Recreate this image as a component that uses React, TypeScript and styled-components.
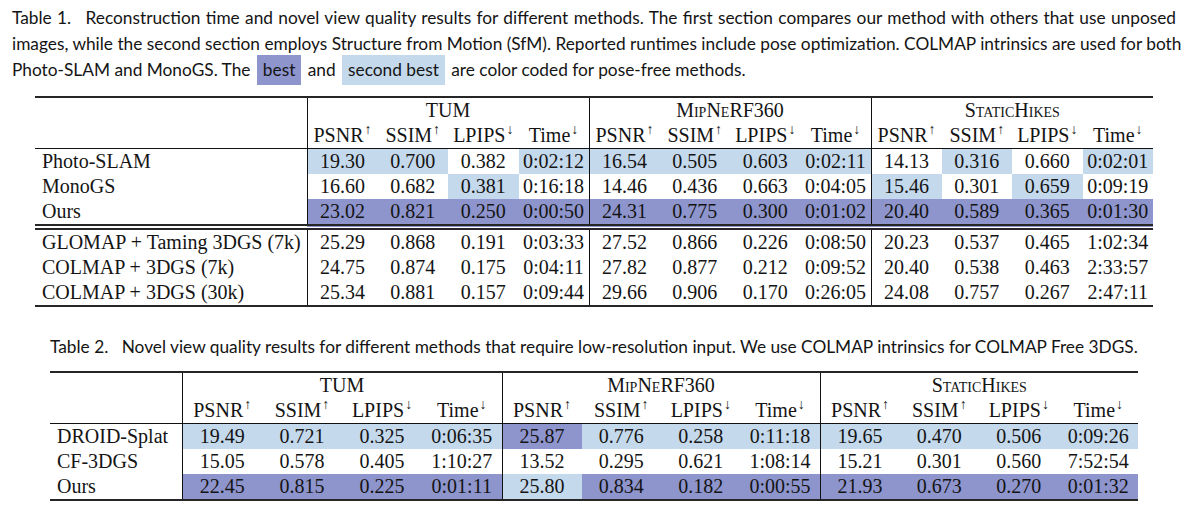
import styled, { createGlobalStyle } from 'styled-components'

const GlobalStyle = createGlobalStyle`
  html, body { margin: 0; padding: 0; background: #fff; }
  body { width: 1190px; height: 521px; overflow: hidden; }
`

type Mark = 'b' | 's' | '-'

const BEST = '#8e95cd'
const SECOND = '#c5d9ec'

const Page = styled.div`
  width: 1190px;
  height: 521px;
  display: flex;
  flex-direction: column;
  color: #141414;
`

const Caption = styled.div<{ $left: number; $width: number; $top: number }>`
  font-family: Lato, 'Open Sans', sans-serif;
  font-size: 17.3px;
  line-height: 26px;
  margin: ${p => p.$top}px 0 0 ${p => p.$left}px;
  width: ${p => p.$width}px;
`

const CapLine = styled.span<{ $justify?: boolean }>`
  display: block;
  white-space: nowrap;
  text-align: ${p => (p.$justify ? 'justify' : 'left')};
  text-align-last: ${p => (p.$justify ? 'justify' : 'left')};
`

const Label = styled.span`
  margin-right: 9px;
`

const Chip = styled.span<{ $kind: Mark }>`
  background: ${p => (p.$kind === 'b' ? BEST : SECOND)};
  padding: 4px 6px 5px;
  margin: 0 2px;
`

const Table = styled.table<{ $left: number; $width: number; $top: number }>`
  border-collapse: collapse;
  table-layout: fixed;
  width: ${p => p.$width}px;
  margin: ${p => p.$top}px 0 0 ${p => p.$left}px;
  font-family: 'Liberation Serif', 'Times New Roman', serif;
  font-size: 20px;
  border-top: 2px solid #262626;
  border-bottom: 2px solid #262626;
`

const Col = styled.col<{ $w: number }>`
  width: ${p => p.$w}px;
`

const Row = styled.tr<{ $double?: boolean }>`
  height: 25px;
  & > td {
    ${p => (p.$double ? 'border-top: 6px double #262626;' : '')}
  }
`

const GroupHead = styled.th`
  font-weight: normal;
  font-variant: small-caps;
  text-align: center;
  line-height: 25px;
  padding: 0;
  border-left: 1px solid #111;
`

const SubHead = styled.th<{ $first?: boolean }>`
  font-weight: normal;
  text-align: center;
  line-height: 25px;
  padding: 0;
  white-space: nowrap;
  border-bottom: 1px solid #111;
  border-left: ${p => (p.$first ? '1px solid #111' : 'none')};
`

const Corner = styled.th`
  border-right: 1px solid #111;
  border-bottom: 1px solid #111;
  padding: 0;
`

const Arrow = styled.sup`
  font-size: 14px;
  line-height: 0;
  vertical-align: 8px;
  margin-left: 1px;
`

const Method = styled.td`
  text-align: left;
  padding: 0 0 0 7px;
  line-height: 25px;
  white-space: nowrap;
  border-right: 1px solid #111;
`

const Cell = styled.td<{ $mark: Mark; $first?: boolean }>`
  text-align: center;
  padding: 0;
  line-height: 25px;
  background: ${p => (p.$mark === 'b' ? BEST : p.$mark === 's' ? SECOND : 'transparent')};
  border-left: ${p => (p.$first ? '1px solid #111' : 'none')};
`

type DataRow = { name: string; values: string[]; marks: string; double?: boolean }

const metrics: [string, string][] = [
  ['PSNR', '↑'],
  ['SSIM', '↑'],
  ['LPIPS', '↓'],
  ['Time', '↓'],
]
const groups = ['TUM', 'MipNeRF360', 'StaticHikes']

const table1: DataRow[] = [
  { name: 'Photo-SLAM', values: '19.30 0.700 0.382 0:02:12 16.54 0.505 0.603 0:02:11 14.13 0.316 0.660 0:02:01'.split(' '), marks: 'ss-sssss-s-s' },
  { name: 'MonoGS', values: '16.60 0.682 0.381 0:16:18 14.46 0.436 0.663 0:04:05 15.46 0.301 0.659 0:09:19'.split(' '), marks: '--s-----s-s-' },
  { name: 'Ours', values: '23.02 0.821 0.250 0:00:50 24.31 0.775 0.300 0:01:02 20.40 0.589 0.365 0:01:30'.split(' '), marks: 'bbbbbbbbbbbb' },
  { name: 'GLOMAP + Taming 3DGS (7k)', values: '25.29 0.868 0.191 0:03:33 27.52 0.866 0.226 0:08:50 20.23 0.537 0.465 1:02:34'.split(' '), marks: '------------', double: true },
  { name: 'COLMAP + 3DGS (7k)', values: '24.75 0.874 0.175 0:04:11 27.82 0.877 0.212 0:09:52 20.40 0.538 0.463 2:33:57'.split(' '), marks: '------------' },
  { name: 'COLMAP + 3DGS (30k)', values: '25.34 0.881 0.157 0:09:44 29.66 0.906 0.170 0:26:05 24.08 0.757 0.267 2:47:11'.split(' '), marks: '------------' },
]

const table2: DataRow[] = [
  { name: 'DROID-Splat', values: '19.49 0.721 0.325 0:06:35 25.87 0.776 0.258 0:11:18 19.65 0.470 0.506 0:09:26'.split(' '), marks: 'ssssbsssssss' },
  { name: 'CF-3DGS', values: '15.05 0.578 0.405 1:10:27 13.52 0.295 0.621 1:08:14 15.21 0.301 0.560 7:52:54'.split(' '), marks: '------------' },
  { name: 'Ours', values: '22.45 0.815 0.225 0:01:11 25.80 0.834 0.182 0:00:55 21.93 0.673 0.270 0:01:32'.split(' '), marks: 'bbbbsbbbbbbb' },
]

function Results({ rows, left, top, width, methodW, colW }: {
  rows: DataRow[]; left: number; top: number; width: number; methodW: number; colW: number[]
}) {
  return (
    <Table $left={left} $top={top} $width={width}>
      <colgroup>
        <Col $w={methodW} />
        {colW.map((w, i) => <Col key={i} $w={w} />)}
      </colgroup>
      <thead>
        <Row>
          <Corner rowSpan={2} />
          {groups.map(g => <GroupHead key={g} colSpan={4}>{g}</GroupHead>)}
        </Row>
        <Row>
          {groups.map(g =>
            metrics.map(([m, a], i) => (
              <SubHead key={g + m} $first={i === 0}>
                {m}<Arrow>{a}</Arrow>
              </SubHead>
            ))
          )}
        </Row>
      </thead>
      <tbody>
        {rows.map(r => (
          <Row key={r.name} $double={r.double}>
            <Method>{r.name}</Method>
            {r.values.map((v, i) => (
              <Cell key={i} $mark={r.marks[i] as Mark} $first={i % 4 === 0}>{v}</Cell>
            ))}
          </Row>
        ))}
      </tbody>
    </Table>
  )
}

export default function App() {
  return (
    <Page>
      <GlobalStyle />
      <Caption $left={12} $top={5} $width={1164}>
        <CapLine $justify>
          <Label>Table 1.</Label> Reconstruction time and novel view quality results for different methods. The first section compares our method with others that use unposed
        </CapLine>
        <CapLine $justify>
          images, while the second section employs Structure from Motion (SfM). Reported runtimes include pose optimization. COLMAP intrinsics are used for both
        </CapLine>
        <CapLine>
          Photo-SLAM and MonoGS. The <Chip $kind="b">best</Chip> and <Chip $kind="s">second best</Chip> are color coded for pose-free methods.
        </CapLine>
      </Caption>
      <Results rows={table1} left={35} top={13} width={1118} methodW={272} colW={Array(12).fill(70.5)} />
      <Caption $left={50} $top={27} $width={1088}>
        <CapLine>
          <Label>Table 2.</Label> Novel view quality results for different methods that require low-resolution input. We use COLMAP intrinsics for COLMAP Free 3DGS.
        </CapLine>
      </Caption>
      <Results rows={table2} left={50} top={11} width={1088} methodW={132} colW={[80, 80, 80, 80, 79.5, 79.5, 79.5, 79.5, 79.5, 79.5, 79.5, 79.5]} />
    </Page>
  )
}
